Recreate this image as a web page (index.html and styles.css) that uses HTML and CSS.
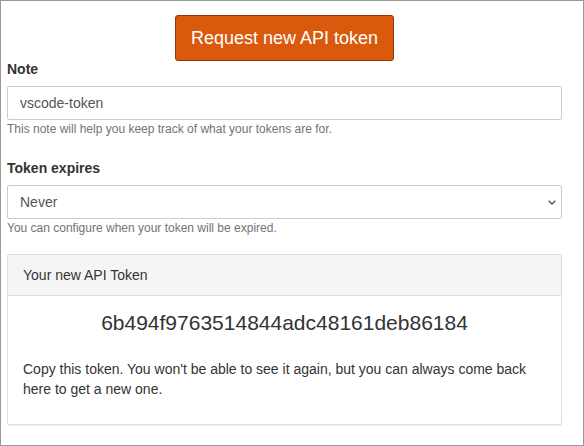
FILE: index.html
```html
<!DOCTYPE html>
<html lang="en">
<head>
<meta charset="utf-8">
<title>API token</title>
<link rel="stylesheet" href="styles.css">
</head>
<body>
<div class="frame">
  <div class="content">
    <div class="actions">
      <button class="btn-primary" type="button">Request new API token</button>
    </div>

    <label class="field-label" for="note">Note</label>
    <input class="field" id="note" type="text" value="vscode-token">
    <p class="help">This note will help you keep track of what your tokens are for.</p>

    <label class="field-label label-gap" for="expires">Token expires</label>
    <div class="select-wrap">
      <select class="field select" id="expires">
        <option>Never</option>
      </select>
      <svg class="chevron" width="8" height="5" viewBox="0 0 8 5" aria-hidden="true">
        <path d="M0.6 0.7 L4 4 L7.4 0.7" fill="none" stroke="#555" stroke-width="1.3"/>
      </svg>
    </div>
    <p class="help">You can configure when your token will be expired.</p>

    <section class="panel">
      <div class="panel-heading">Your new API Token</div>
      <div class="panel-body">
        <div class="token">6b494f9763514844adc48161deb86184</div>
        <p class="note-text">Copy this token. You won't be able to see it again, but you can always come back here to get a new one.</p>
      </div>
    </section>
  </div>
</div>
</body>
</html>
```

FILE: styles.css
```css
* { box-sizing: border-box; }

html, body {
  margin: 0;
  padding: 0;
  background: #fff;
}

body {
  font-family: "Liberation Sans", Arial, sans-serif;
  font-size: 14px;
  color: #333;
}

.frame {
  width: 584px;
  height: 446px;
  border: 1px solid #999;
  padding: 14px 0 0 6px;
}

.content {
  width: 555px;
  display: flex;
  flex-direction: column;
}

.actions {
  display: flex;
  justify-content: center;
}

.btn-primary {
  font-family: "Liberation Sans", Arial, sans-serif;
  font-size: 18px;
  line-height: 24px;
  height: 46px;
  padding: 10px 15px;
  color: #fff;
  background: #d9590d;
  border: 1px solid #8c3a0c;
  border-radius: 3px;
  cursor: pointer;
}

.field-label {
  display: block;
  font-weight: bold;
  font-size: 14px;
  line-height: 17px;
  margin: 0 0 8px;
}

.label-gap {
  margin-top: 22px;
}

.field {
  display: block;
  width: 100%;
  height: 34px;
  margin: 0;
  padding: 0 12px;
  font-family: "Liberation Sans", Arial, sans-serif;
  font-size: 14px;
  color: #555;
  background: #fff;
  border: 1px solid #ccc;
  border-radius: 2px;
  outline: none;
}

.select-wrap {
  position: relative;
}

.select {
  -webkit-appearance: none;
  appearance: none;
  padding-right: 24px;
}

.chevron {
  position: absolute;
  right: 6px;
  top: 15px;
  pointer-events: none;
}

.help {
  margin: 1px 0 0;
  font-size: 12px;
  line-height: 17px;
  color: #737373;
}

.panel {
  margin-top: 17px;
  border: 1px solid #ddd;
  border-radius: 2px;
  background: #fff;
  box-shadow: 0 1px 1px rgba(0, 0, 0, 0.06);
}

.panel-heading {
  padding: 10px 15px;
  font-size: 14px;
  line-height: 20px;
  color: #333;
  background: #f5f5f5;
  border-bottom: 1px solid #ddd;
}

.panel-body {
  padding: 15px 15px 15px;
}

.token {
  text-align: center;
  font-size: 21px;
  line-height: 23px;
  color: #333;
}

.note-text {
  margin: 25px 0 10px;
  font-size: 14px;
  line-height: 20px;
}
```
